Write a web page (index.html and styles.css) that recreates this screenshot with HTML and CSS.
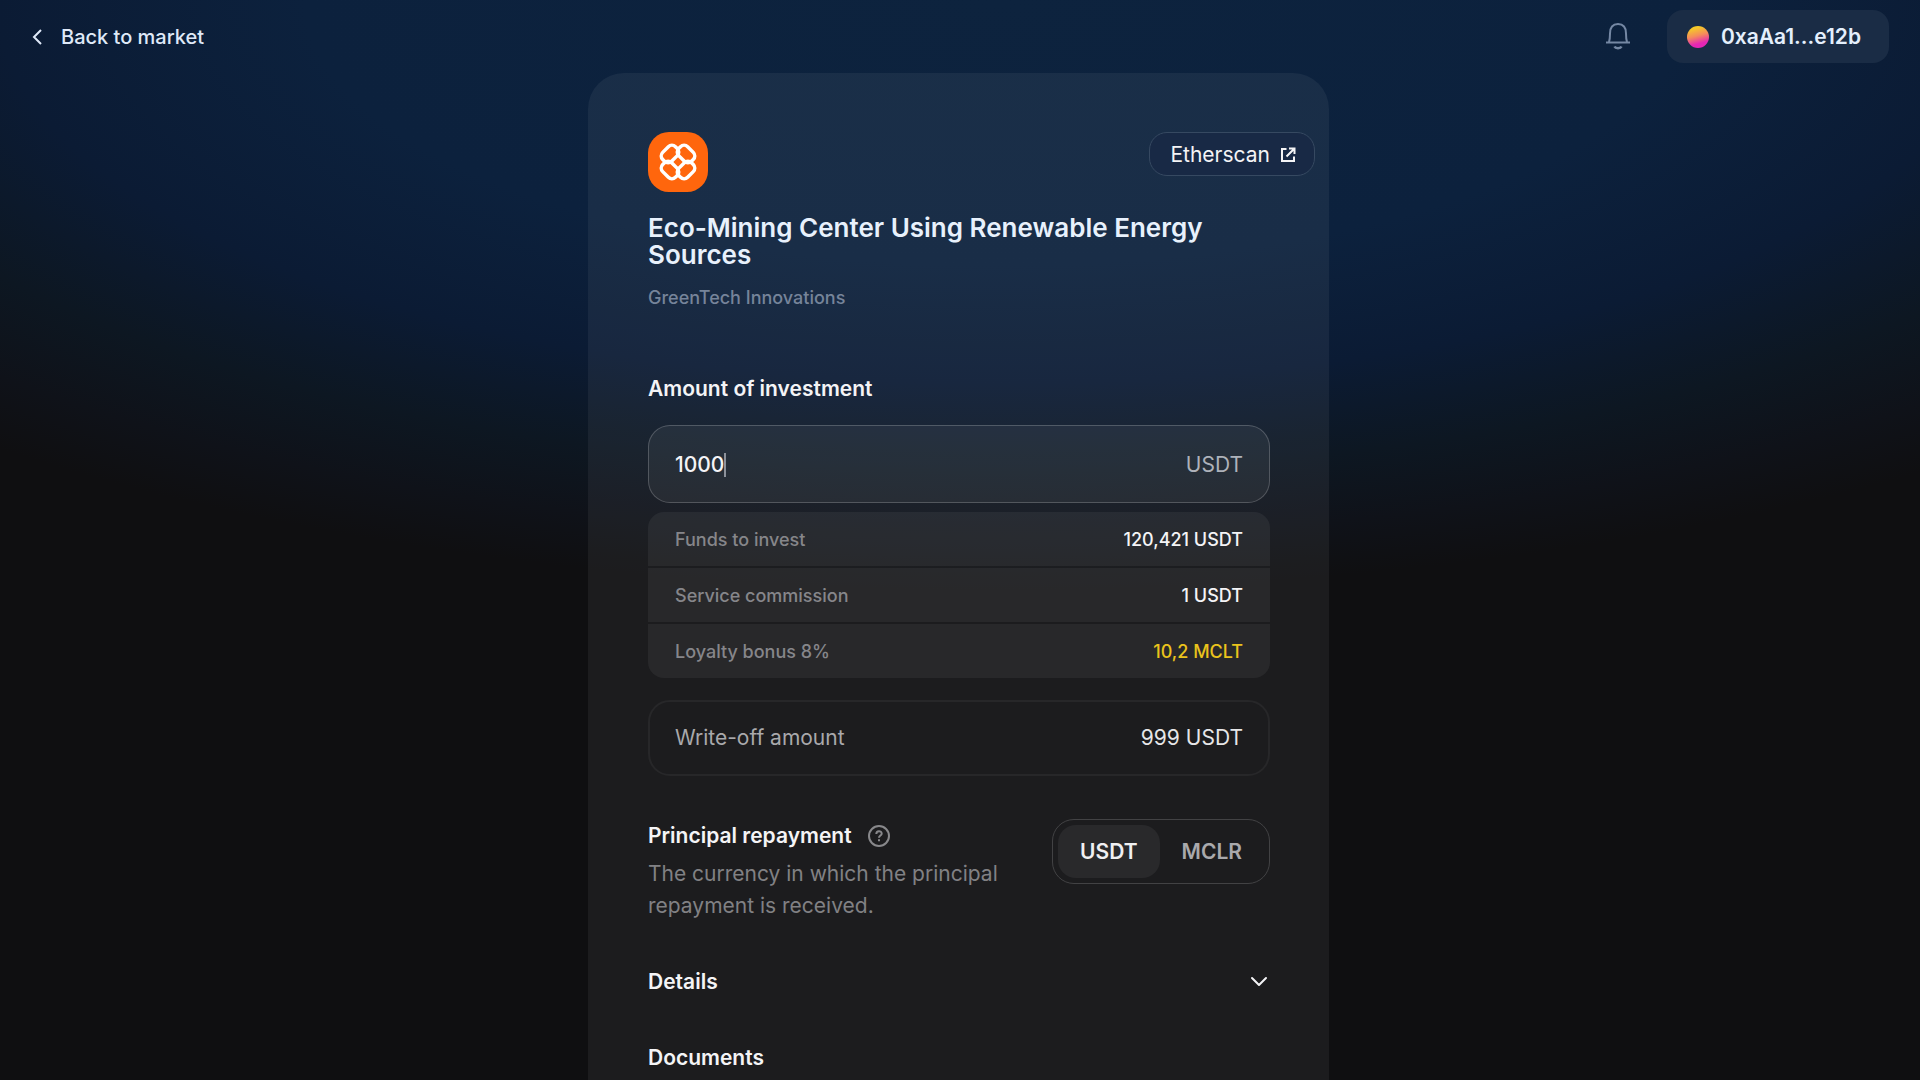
FILE: index.html
```html
<!DOCTYPE html>
<html lang="en">
<head>
    <meta charset="UTF-8">
    <meta name="viewport" content="width=device-width, initial-scale=1.0">
    <title>Invest</title>
    <link rel="stylesheet" href="styles.css">
</head>
<body>
    <header class="topbar">
        <a href="#" class="back">
            <svg width="12" height="18" viewBox="0 0 12 18" fill="none" stroke="currentColor" stroke-width="2"><path d="M10 2 3 9l7 7"/></svg>
            Back to market
        </a>
        <div class="account">
            <button class="bell" aria-label="Notifications">
                <svg width="26" height="30" viewBox="0 0 26 30" fill="none" stroke="currentColor" stroke-width="2" stroke-linejoin="round"><path d="M1 20.500h24M4 20c1-3 1-5.500 1-8.500C5 5.500 8 2 13 2s8 3.500 8 9.500c0 3 0 5.500 1 8.500"/><path d="M9.500 24.500c1 2.300 6 2.300 7 0" stroke-width="2.500"/></svg>
            </button>
            <button class="wallet"><span class="avatar"></span>0xaAa1...e12b</button>
        </div>
    </header>

    <main class="card">
        <div class="card-head">
            <svg class="logo" width="60" height="60" viewBox="0 0 60 60" fill="none" stroke="#fff" stroke-width="3.500">
                <rect width="60" height="60" rx="21" fill="#ff660d" stroke="none"/>
                <rect x="-9" y="-6.300" width="18" height="12.600" rx="5" transform="translate(22 22) rotate(-45)"/>
                <rect x="-9" y="-6.300" width="18" height="12.600" rx="5" transform="translate(38 22) rotate(45)"/>
                <rect x="-9" y="-6.300" width="18" height="12.600" rx="5" transform="translate(22 38) rotate(45)"/>
                <rect x="-9" y="-6.300" width="18" height="12.600" rx="5" transform="translate(38 38) rotate(-45)"/>
            </svg>
            <a href="#" class="etherscan">
                Etherscan
                <svg width="16" height="16" viewBox="0 0 16 16" fill="none" stroke="currentColor" stroke-width="2"><path d="M6.500 2H2v12h12V9.500M9 1.500h5.500V7M14 2 6.500 9.500"/></svg>
            </a>
        </div>

        <div class="content">
            <h1>Eco-Mining Center Using Renewable Energy Sources</h1>
            <p class="company">GreenTech Innovations</p>

            <label for="amount" class="label">Amount of investment</label>
            <div class="field">
                <input type="text" id="amount" value="1000" size="4">
                <span class="caret"></span>
                <span class="unit">USDT</span>
            </div>

            <dl class="rows">
                <div class="row"><dt>Funds to invest</dt><dd>120,421 USDT</dd></div>
                <div class="row"><dt>Service commission</dt><dd>1 USDT</dd></div>
                <div class="row"><dt>Loyalty bonus 8%</dt><dd class="bonus">10,2 MCLT</dd></div>
            </dl>

            <div class="total">
                <span>Write-off amount</span>
                <span class="sum">999 USDT</span>
            </div>

            <div class="repay">
                <div class="repay-text">
                    <h2>Principal repayment
                        <button class="help" aria-label="About principal repayment">
                            <svg width="22" height="22" viewBox="0 0 22 22" fill="none" stroke="currentColor" stroke-width="2"><circle cx="11" cy="11" r="10"/><path d="M8.300 9c0-3.700 5.400-3.600 5.400-.3 0 1.800-2.700 2-2.700 4M11 14.200v2"/></svg>
                        </button>
                    </h2>
                    <p>The currency in which the principal repayment is received.</p>
                </div>
                <div class="toggle" role="radiogroup" aria-label="Repayment currency">
                    <input type="radio" name="currency" id="usdt" checked>
                    <label for="usdt">USDT</label>
                    <input type="radio" name="currency" id="mclr">
                    <label for="mclr">MCLR</label>
                </div>
            </div>

            <button class="details" aria-expanded="false">
                Details
                <svg width="20" height="20" viewBox="0 0 20 20" fill="none" stroke="currentColor" stroke-width="2" stroke-linecap="round" stroke-linejoin="round"><path d="m2 6 7 7 7-7"/></svg>
            </button>
            <h2>Documents</h2>
        </div>
    </main>
</body>
</html>
```
FILE: styles.css
```css
*{
    box-sizing: border-box;
    margin: 0;
    padding: 0;
}
body{
    min-height: 100vh;
    display: flex;
    flex-direction: column;
    padding-right: 3px;
    font-family: Inter, "Liberation Sans", sans-serif;
    font-size: 20px;
    line-height: 24px;
    color: #f4f4f6;
    background: #0f0f11 radial-gradient(ellipse 1540px 590px at 52% 0, #0d233e 0%, #0c213d 45%, #0b1b34 65%, #0d1722 80%, #0f1219 91%, #0f0f11 100%) no-repeat;
}
a{
    color: inherit;
    text-decoration: none;
}
button, input{
    font: inherit;
    color: inherit;
    background: none;
    border: none;
    cursor: pointer;
}
h2, .label, .details{
    font-size: 21px;
    font-weight: 600;
    line-height: 26px;
}

/* top bar */
.topbar{
    display: flex;
    justify-content: space-between;
    align-items: center;
    height: 73px;
    padding: 0 28px 0 31px;
}
.back{
    display: flex;
    align-items: center;
    gap: 18px;
    color: #dfe9f8;
    font-weight: 500;
}
.account{
    display: flex;
    align-items: center;
    gap: 36px;
}
.bell{
    display: flex;
    color: #7588a4;
}
.wallet{
    display: flex;
    align-items: center;
    gap: 12px;
    height: 53px;
    padding: 0 28px 0 20px;
    border-radius: 16px;
    background: #1a2c45;
    color: #e4effc;
    font-size: 21px;
    font-weight: 600;
}
.avatar{
    width: 22px;
    height: 22px;
    border-radius: 50%;
    background: linear-gradient(165deg, #f5c928 15%, #f58a5c 45%, #e526b4 75%);
}

/* card */
.card{
    flex: 1;
    width: 100%;
    max-width: 741px;
    margin: 0 auto;
    border-radius: 36px 36px 0 0;
    background: rgba(255, 255, 255, 0.055);
}
.card-head{
    display: flex;
    justify-content: space-between;
    align-items: flex-start;
    padding: 59px 14px 0 60px;
}
.etherscan{
    display: flex;
    align-items: center;
    gap: 10px;
    height: 44px;
    padding: 1px 18px 0 20px;
    border: 1px solid #364961;
    border-radius: 18px;
    background: rgba(24, 38, 68, 0.6);
    font-size: 21px;
}
.content{
    padding: 22px 59px 0 60px;
}
h1{
    font-size: 26px;
    font-weight: 600;
    line-height: 27px;
    color: #e8f1fc;
}
.company{
    margin-top: 18px;
    font-size: 18px;
    font-weight: 500;
    color: #76849a;
}
.label{
    display: block;
    margin-top: 66px;
}
.field{
    display: flex;
    align-items: center;
    height: 78px;
    margin-top: 23px;
    padding: 1px 26px 0;
    border: 1px solid rgba(255, 255, 255, 0.2);
    border-radius: 22px;
    background: rgba(255, 255, 255, 0.055);
    font-size: 21px;
}
.field input{
    field-sizing: content;
    outline: none;
    font-weight: 500;
}
.caret{
    width: 2px;
    height: 24px;
    background: #8d929b;
}
.unit{
    margin-left: auto;
    color: #aeb2ba;
}
.rows{
    margin-top: 9px;
    border-radius: 16px;
    overflow: hidden;
    font-size: 18px;
    font-weight: 500;
}
.row{
    display: flex;
    justify-content: space-between;
    align-items: center;
    height: 54px;
    padding: 1px 27px 0;
    background: rgba(255, 255, 255, 0.055);
}
.row + .row{
    margin-top: 2px;
}
dt{
    color: #86868a;
}
.bonus{
    color: #eac31c;
}
.total{
    display: flex;
    justify-content: space-between;
    align-items: center;
    height: 76px;
    margin-top: 22px;
    padding: 0 25px;
    border: 2px solid #272729;
    border-radius: 22px;
    font-size: 21px;
    color: #a9a9ac;
}
.sum{
    color: #e6e6e8;
}

/* principal repayment */
.repay{
    display: flex;
    justify-content: space-between;
    align-items: flex-start;
    margin-top: 43px;
}
.repay-text{
    max-width: 370px;
    padding-top: 4px;
}
.repay h2{
    display: flex;
    align-items: center;
    gap: 16px;
}
.help{
    display: flex;
    color: #88888b;
}
.repay p{
    margin-top: 9px;
    font-size: 21px;
    line-height: 32px;
    color: #818184;
}
.toggle{
    display: flex;
    height: 65px;
    padding: 5px;
    border: 1px solid #424244;
    border-radius: 22px;
    color: #a9a9ac;
    font-weight: 600;
    font-size: 21px;
}
.toggle input{
    position: absolute;
    opacity: 0;
}
.toggle label{
    display: flex;
    align-items: center;
    padding: 0 22px;
    border-radius: 18px;
    cursor: pointer;
}
.toggle input:checked + label{
    background: #29292b;
    color: #f0f0f2;
}
.details{
    display: flex;
    justify-content: space-between;
    align-items: center;
    width: 100%;
    margin: 47px 0 50px;
}
```
